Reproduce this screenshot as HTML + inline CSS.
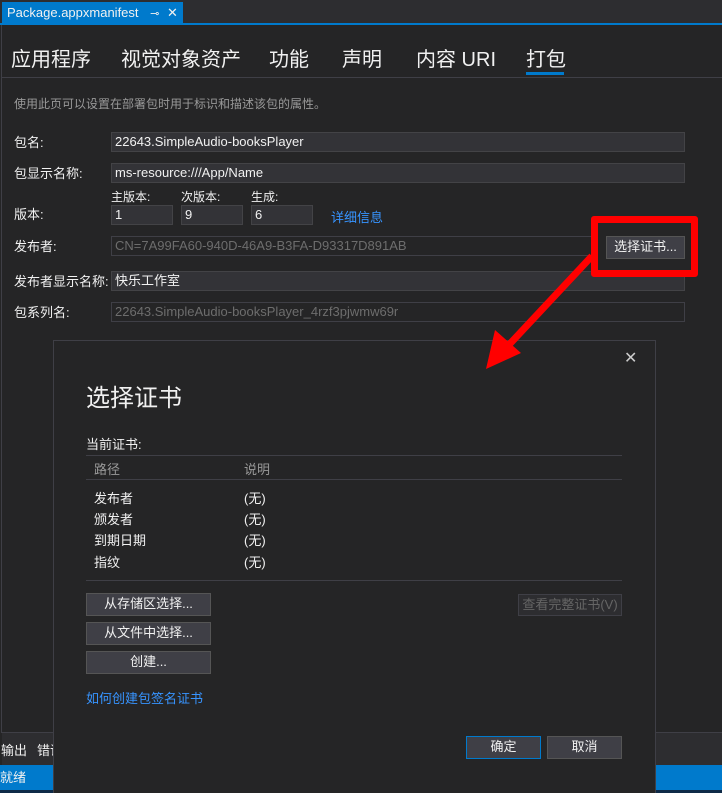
<!DOCTYPE html>
<html><head><meta charset="utf-8"><style>
*{margin:0;padding:0;box-sizing:border-box}
html,body{width:722px;height:793px;overflow:hidden}
body{background:#252526;position:relative;font-family:"Liberation Sans","Noto Sans CJK SC",sans-serif;color:#f1f1f1;font-size:13px}
.a{position:absolute;white-space:nowrap}
.in{position:absolute;height:20px;background:#333337;border:1px solid #434346;padding-left:3px;line-height:18px;font-size:13px}
.dis{background:#252526;border-color:#3f3f46;color:#6d6d6d}
.btn{position:absolute;background:#3f3f46;border:1px solid #555;text-align:center;line-height:20px;font-size:13px;color:#f1f1f1}
.lbl{position:absolute;font-size:13px;color:#f1f1f1}
</style></head><body>
<div class="a" style="left:0;top:0;width:722px;height:25px;background:#2d2d30"></div>
<div class="a" style="left:2px;top:2px;width:181px;height:22px;background:#007acc;font-size:13px;line-height:22px;padding-left:5px">Package.appxmanifest <span style="margin-left:8px;font-size:11px">⊸</span> <span style="margin-left:4px">✕</span></div>
<div class="a" style="left:0;top:23px;width:722px;height:2px;background:#007acc"></div>
<div class="a" style="left:1px;top:25px;width:1px;height:708px;background:#3f3f46"></div>
<div class="a" style="left:11px;top:47px;font-size:20px;line-height:26px">应用程序</div>
<div class="a" style="left:121px;top:47px;font-size:20px;line-height:26px">视觉对象资产</div>
<div class="a" style="left:269px;top:47px;font-size:20px;line-height:26px">功能</div>
<div class="a" style="left:342px;top:47px;font-size:20px;line-height:26px">声明</div>
<div class="a" style="left:416px;top:47px;font-size:20px;line-height:26px">内容 URI</div>
<div class="a" style="left:526px;top:47px;font-size:20px;line-height:26px">打包</div>
<div class="a" style="left:526px;top:72px;width:38px;height:3px;background:#007acc"></div>
<div class="a" style="left:2px;top:77px;width:720px;height:1px;background:#3f3f46"></div>
<div class="a" style="left:14px;top:95px;font-size:12px;color:#999">使用此页可以设置在部署包时用于标识和描述该包的属性。</div>

<div class="lbl" style="left:14px;top:132px">包名:</div>
<div class="in" style="left:111px;top:132px;width:574px">22643.SimpleAudio-booksPlayer</div>
<div class="lbl" style="left:14px;top:163px">包显示名称:</div>
<div class="in" style="left:111px;top:163px;width:574px">ms-resource:///App/Name</div>
<div class="lbl" style="left:111px;top:188px;font-size:12px">主版本:</div>
<div class="lbl" style="left:181px;top:188px;font-size:12px">次版本:</div>
<div class="lbl" style="left:251px;top:188px;font-size:12px">生成:</div>
<div class="lbl" style="left:14px;top:204px">版本:</div>
<div class="in" style="left:111px;top:205px;width:62px">1</div>
<div class="in" style="left:181px;top:205px;width:62px">9</div>
<div class="in" style="left:251px;top:205px;width:62px">6</div>
<div class="lbl" style="left:331px;top:207px;color:#3794ff">详细信息</div>
<div class="lbl" style="left:14px;top:236px">发布者:</div>
<div class="in dis" style="left:111px;top:236px;width:574px">CN=7A99FA60-940D-46A9-B3FA-D93317D891AB</div>
<div class="lbl" style="left:14px;top:271px">发布者显示名称:</div>
<div class="in" style="left:111px;top:271px;width:574px">快乐工作室</div>
<div class="lbl" style="left:14px;top:302px">包系列名:</div>
<div class="in dis" style="left:111px;top:302px;width:574px">22643.SimpleAudio-booksPlayer_4rzf3pjwmw69r</div>

<div class="a" style="left:591px;top:216px;width:107px;height:61px;border:7px solid #f00;border-radius:3px;background:#252526"></div>
<div class="btn" style="left:606px;top:236px;width:79px;height:23px">选择证书...</div>

<div class="a" style="left:2px;top:732px;width:720px;height:33px;background:#2d2d30;border-top:1px solid #3f3f46"></div>
<div class="a" style="left:1px;top:740px;font-size:13px">输出</div>
<div class="a" style="left:37px;top:740px;font-size:13px">错误</div>
<div class="a" style="left:0;top:765px;width:722px;height:25px;background:#007acc;font-size:13px;line-height:25px">就绪</div>
<div class="a" style="left:0;top:790px;width:722px;height:3px;background:#0e2a47"></div>

<div class="a" style="left:53px;top:340px;width:603px;height:460px;background:#252526;border:1px solid #3f3f46"></div>
<div class="a" style="left:624px;top:348px;font-size:16px;color:#ccc">✕</div>
<div class="a" style="left:86px;top:378px;font-size:24px">选择证书</div>
<div class="a" style="left:86px;top:434px">当前证书:</div>
<div class="a" style="left:86px;top:455px;width:536px;height:1px;background:#3f3f46"></div>
<div class="a" style="left:94px;top:459px;color:#999">路径</div>
<div class="a" style="left:244px;top:459px;color:#999">说明</div>
<div class="a" style="left:86px;top:479px;width:536px;height:1px;background:#3f3f46"></div>
<div class="a" style="left:94px;top:488px">发布者</div><div class="a" style="left:244px;top:488px">(无)</div>
<div class="a" style="left:94px;top:509px">颁发者</div><div class="a" style="left:244px;top:509px">(无)</div>
<div class="a" style="left:94px;top:530px">到期日期</div><div class="a" style="left:244px;top:530px">(无)</div>
<div class="a" style="left:94px;top:552px">指纹</div><div class="a" style="left:244px;top:552px">(无)</div>
<div class="a" style="left:86px;top:580px;width:536px;height:1px;background:#3f3f46"></div>
<div class="btn" style="left:86px;top:593px;width:125px;height:23px">从存储区选择...</div>
<div class="btn" style="left:86px;top:622px;width:125px;height:23px">从文件中选择...</div>
<div class="btn" style="left:86px;top:651px;width:125px;height:23px">创建...</div>
<div class="btn" style="left:518px;top:594px;width:104px;height:22px;background:#2d2d30;border-color:#3f3f46;color:#656565">查看完整证书(V)</div>
<div class="a" style="left:86px;top:688px;color:#3794ff">如何创建包签名证书</div>
<div class="btn" style="left:466px;top:736px;width:75px;height:23px;border-color:#007acc">确定</div>
<div class="btn" style="left:547px;top:736px;width:75px;height:23px">取消</div>

<svg class="a" style="left:0;top:0" width="722" height="793"><line x1="592" y1="256" x2="506" y2="348" stroke="#f00" stroke-width="7"/><polygon points="486,369 495,330 521,353" fill="#f00"/></svg>
</body></html>
